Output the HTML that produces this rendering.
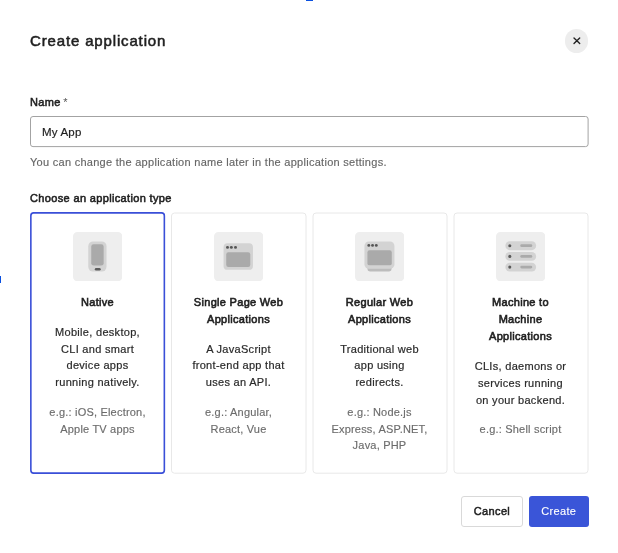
<!DOCTYPE html>
<html><head><meta charset="utf-8">
<style>
*{box-sizing:border-box;margin:0;padding:0}
html,body{width:618px;height:553px;overflow:hidden;background:#fff;font-family:"Liberation Sans",sans-serif;color:#1f1f1f}
.abs{position:absolute;will-change:transform}
.title{left:30px;top:31.5px;font-size:15px;white-space:nowrap;letter-spacing:0.85px;-webkit-text-stroke:0.55px #1f1f1f}
.close{left:565px;top:29.4px;width:23.3px;height:23.3px;border-radius:50%;background:#ededed;will-change:auto}
.lbl{font-size:11px;white-space:nowrap;letter-spacing:0.35px;-webkit-text-stroke:0.55px #1f1f1f}
.input{left:30px;top:116px;width:558px;height:31px;border:1px solid #b5b5b5;border-radius:3px}
.inptxt{left:42.3px;top:125.5px;font-size:11.5px;white-space:nowrap;letter-spacing:0.2px;-webkit-text-stroke:0.2px #1f1f1f}
.help{left:30px;top:155.5px;font-size:11px;color:#666;white-space:nowrap;letter-spacing:0.28px;-webkit-text-stroke:0.15px #666}
.card{top:212px;width:135px;height:262px;border:1px solid #e8e8e8;border-radius:4px}
.card.sel{border:2px solid #3a4fd8}
.icon{top:231.5px;width:49.3px;height:49.3px}
.content{top:294px;width:135px;display:flex;flex-direction:column;align-items:center;text-align:center;font-size:11px;line-height:16.75px}
.ct{color:#1f1f1f;letter-spacing:0.3px;-webkit-text-stroke:0.6px #1f1f1f}
.cd{margin-top:13px;color:#2a2a2a;letter-spacing:0.3px;-webkit-text-stroke:0.2px #2a2a2a}
.ce{margin-top:13px;color:#6c6c6c;letter-spacing:0.2px;-webkit-text-stroke:0.15px #6c6c6c}
.btn{top:496px;height:31px;border-radius:3px;font-size:11px;letter-spacing:0.35px;text-align:center;line-height:31px}
.cancel{left:461px;width:62px;border:1px solid #d9d9d9;color:#1f1f1f;line-height:29px;-webkit-text-stroke:0.5px #1f1f1f}
.create{left:529px;width:59.5px;background:#3a55d8;color:#fff;-webkit-text-stroke:0.12px #fff}
.mark1{left:306px;top:0;width:7px;height:1px;background:#0a50e0}
.mark2{left:0;top:276px;width:1px;height:7px;background:#0a50e0}
</style></head><body>
<div class="abs mark1"></div>
<div class="abs mark2"></div>
<div class="abs title">Create application</div>
<div class="abs close"><svg width="23.5" height="23.5" viewBox="0 0 23.5 23.5" style="display:block"><path d="M9 8.9L14.7 14.6M14.7 8.9L9 14.6" stroke="#222" stroke-width="1.35" stroke-linecap="round"/></svg></div>
<div class="abs lbl" style="left:30px;top:96px">Name <span style="-webkit-text-stroke:0;color:#555;margin-left:-1px">*</span></div>
<div class="abs inptxt">My App</div>
<div class="abs help">You can change the application name later in the application settings.</div>
<div class="abs lbl" style="left:30px;top:192px">Choose an application type</div>

<svg class="abs" style="left:0;top:0" width="618" height="553" viewBox="0 0 618 553">
<rect x="30.5" y="116.5" width="557.6" height="30.1" rx="2.5" fill="none" stroke="#a3a3a3" stroke-width="1"/>
<rect x="171.5" y="213" width="134.5" height="260.2" rx="3" fill="none" stroke="#e8e8e8" stroke-width="1"/>
<rect x="313" y="213" width="134" height="260.2" rx="3" fill="none" stroke="#e8e8e8" stroke-width="1"/>
<rect x="454" y="213" width="134" height="260.2" rx="3" fill="none" stroke="#e8e8e8" stroke-width="1"/>
<rect x="30.85" y="212.85" width="133.5" height="260.3" rx="2.8" fill="none" stroke="#3a4fd8" stroke-width="1.6"/>
</svg>

<!-- Native icon -->
<svg class="abs icon" style="left:73.2px" viewBox="0 0 50 50">
<rect x="0" y="0" width="50" height="50" rx="4.5" fill="#eeeeee"/>
<rect x="15.5" y="9.6" width="18.5" height="30.5" rx="4.8" fill="#d3d3d3"/>
<rect x="18.5" y="12.4" width="12.6" height="21.7" rx="2.5" fill="#aaaaaa"/>
<rect x="22.1" y="36.4" width="6" height="2.6" rx="1.3" fill="#5c5c5c"/>
</svg>
<!-- SPA icon -->
<svg class="abs icon" style="left:214.2px" viewBox="0 0 50 50">
<rect x="0" y="0" width="50" height="50" rx="4.5" fill="#eeeeee"/>
<rect x="9.7" y="11.3" width="29.8" height="27.1" rx="4" fill="#d3d3d3"/>
<rect x="12.4" y="20.5" width="24.4" height="15" rx="2.2" fill="#aaaaaa"/>
<circle cx="13.7" cy="15.6" r="1.5" fill="#555"/>
<circle cx="17.6" cy="15.6" r="1.5" fill="#555"/>
<circle cx="21.8" cy="15.6" r="1.5" fill="#555"/>
</svg>
<!-- Regular web icon -->
<svg class="abs icon" style="left:355px" viewBox="0 0 50 50">
<rect x="0" y="0" width="50" height="50" rx="4.5" fill="#eeeeee"/>
<rect x="12.6" y="34" width="24.5" height="6" rx="2.5" fill="#bcbcbc"/>
<rect x="9.6" y="9.7" width="30.4" height="27.6" rx="4.5" fill="#d3d3d3"/>
<rect x="12.6" y="18.6" width="24.7" height="15.2" rx="2.2" fill="#aaaaaa"/>
<circle cx="14" cy="13.6" r="1.45" fill="#555"/>
<circle cx="17.8" cy="13.6" r="1.45" fill="#555"/>
<circle cx="21.6" cy="13.6" r="1.45" fill="#555"/>
</svg>
<!-- M2M icon -->
<svg class="abs icon" style="left:496.3px" viewBox="0 0 50 50">
<rect x="0" y="0" width="50" height="50" rx="4.5" fill="#eeeeee"/>
<rect x="9.5" y="9.4" width="31.2" height="9" rx="4.5" fill="#d3d3d3"/>
<rect x="9.5" y="20.25" width="31.2" height="9" rx="4.5" fill="#d3d3d3"/>
<rect x="9.5" y="31.1" width="31.2" height="9" rx="4.5" fill="#d3d3d3"/>
<circle cx="14" cy="13.9" r="1.55" fill="#5a5a5a"/>
<circle cx="14" cy="24.75" r="1.55" fill="#5a5a5a"/>
<circle cx="14" cy="35.6" r="1.55" fill="#5a5a5a"/>
<rect x="24.6" y="12.5" width="12.2" height="2.8" rx="1.4" fill="#aaaaaa"/>
<rect x="24.6" y="23.35" width="12.2" height="2.8" rx="1.4" fill="#aaaaaa"/>
<rect x="24.6" y="34.2" width="12.2" height="2.8" rx="1.4" fill="#aaaaaa"/>
</svg>

<div class="abs content" style="left:30px">
<div class="ct">Native</div>
<div class="cd">Mobile, desktop,<br>CLI and smart<br>device apps<br>running natively.</div>
<div class="ce">e.g.: iOS, Electron,<br>Apple TV apps</div>
</div>
<div class="abs content" style="left:171px">
<div class="ct">Single Page Web<br>Applications</div>
<div class="cd">A JavaScript<br>front-end app that<br>uses an API.</div>
<div class="ce">e.g.: Angular,<br>React, Vue</div>
</div>
<div class="abs content" style="left:312px">
<div class="ct">Regular Web<br>Applications</div>
<div class="cd">Traditional web<br>app using<br>redirects.</div>
<div class="ce">e.g.: Node.js<br>Express, ASP.NET,<br>Java, PHP</div>
</div>
<div class="abs content" style="left:453px">
<div class="ct">Machine to<br>Machine<br>Applications</div>
<div class="cd" style="margin-top:14px">CLIs, daemons or<br>services running<br>on your backend.</div>
<div class="ce" style="margin-top:12.3px">e.g.: Shell script</div>
</div>

<div class="abs btn cancel">Cancel</div>
<div class="abs btn create">Create</div>
</body></html>
